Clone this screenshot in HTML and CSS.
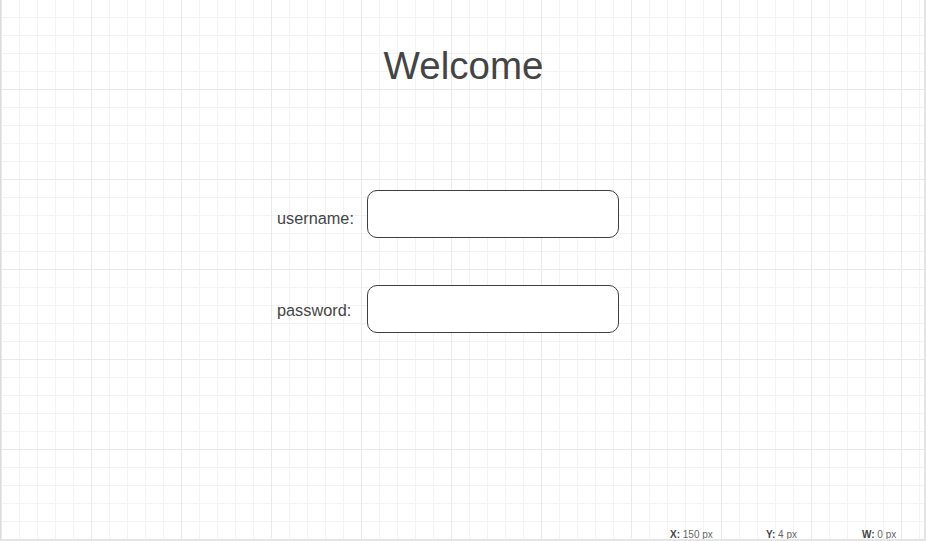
FILE: index.html
```html
<!DOCTYPE html>
<html>
<head>
<meta charset="utf-8">
<link rel="stylesheet" href="styles.css">
</head>
<body>
<div class="canvas">
  <h1 class="title">Welcome</h1>
  <div class="form">
    <div class="row row-user">
      <label class="label">username:</label>
      <div class="field"></div>
    </div>
    <div class="row row-pass">
      <label class="label">password:</label>
      <div class="field"></div>
    </div>
  </div>
  <div class="status">
    <span class="stat"><b>X:</b> 150 px</span>
    <span class="stat"><b>Y:</b> 4 px</span>
    <span class="stat"><b>W:</b> 0 px</span>
  </div>
</div>
</body>
</html>
```

FILE: styles.css
```css
html, body {
  margin: 0;
  padding: 0;
  background: #ffffff;
}
body {
  font-family: "Liberation Sans", Arial, sans-serif;
  color: #444444;
}
.canvas {
  position: relative;
  box-sizing: border-box;
  width: 926px;
  height: 541px;
  overflow: hidden;
  border-left: 1px solid #dcdcdc;
  border-right: 2px solid #e4e4e4;
  border-bottom: 2px solid #e4e4e4;
  background-color: #ffffff;
  background-image:
    linear-gradient(to right, #e9e9e9 1px, transparent 1px),
    linear-gradient(to bottom, #e9e9e9 1px, transparent 1px),
    linear-gradient(to right, #f3f3f3 1px, transparent 1px),
    linear-gradient(to bottom, #f3f3f3 1px, transparent 1px);
  background-size: 90px 90px, 90px 90px, 18px 18px, 18px 18px;
  background-position: 0 0, 0 89px, 0 0, 0 17px;
  padding-top: 43px;
}
.title {
  margin: 0;
  font-weight: normal;
  font-size: 38.5px;
  line-height: 46px;
  text-align: center;
  color: #444444;
  padding-left: 2px;
}
.form {
  margin-top: 101px;
  margin-left: 276px;
  display: flex;
  flex-direction: column;
  gap: 47px;
}
.row {
  display: grid;
  grid-template-columns: 90px 252px;
  height: 48px;
}
.label {
  font-size: 16.3px;
  line-height: 18px;
  color: #444444;
  align-self: start;
}
.row-user .label { padding-top: 19px; }
.row-pass .label { padding-top: 16px; }
.field {
  box-sizing: border-box;
  height: 48px;
  border: 1px solid #3e3e3e;
  border-radius: 10px;
  background: #ffffff;
}
.status {
  position: absolute;
  left: 669px;
  bottom: -2px;
  display: flex;
  font-size: 10px;
  line-height: 12px;
  color: #666666;
}
.stat {
  width: 96px;
}
.stat b {
  color: #444444;
}
```
